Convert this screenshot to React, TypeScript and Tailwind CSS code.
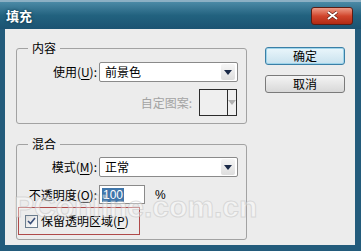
import React from "react";

const cjk = "font-['Noto_Sans_CJK_SC','Liberation_Sans',sans-serif]";

const ArrowDown: React.FC<{ color?: string }> = ({ color = "#1b2a48" }) => (
  <svg width="8" height="5" viewBox="0 0 8 5">
    <path d="M0 0 H8 L4 5 Z" fill={color} />
  </svg>
);

const Dropdown: React.FC<{ value: string }> = ({ value }) => (
  <div className="ml-[2px] w-[139px] h-[20px] bg-white border border-[#8a8a8a] rounded-[2px] flex items-center">
    <span className="pl-[5px] flex-1 text-[12px] text-black leading-none">{value}</span>
    <div className="w-[14px] h-[16px] mr-[2px] rounded-[2px] bg-gradient-to-b from-[#f6f6f6] to-[#dedede] flex items-center justify-center">
      <ArrowDown />
    </div>
  </div>
);

const Button: React.FC<{ label: string; primary?: boolean }> = ({ label, primary }) => (
  <div
    className={`w-[80px] h-[18px] rounded-[3px] border flex items-center justify-center text-[12px] text-black leading-none ${
      primary
        ? "border-[#3b7fa6] bg-gradient-to-b from-[#eaf6fb] to-[#c9e2ee] shadow-[inset_0_0_0_1px_#9ed4ea]"
        : "border-[#7a7a7a] bg-gradient-to-b from-[#f4f4f4] to-[#d8d8d8]"
    }`}
  >
    {label}
  </div>
);

const U: React.FC<{ c: string }> = ({ c }) => <span className="underline underline-offset-2">{c}</span>;

export default function App() {
  return (
    <div className={`w-[361px] h-[251px] flex flex-col bg-[#235b7b] relative overflow-hidden ${cjk}`}>
      {/* title bar */}
      <div className="h-[29px] flex items-center pl-[6px] bg-gradient-to-b from-[#4b8aa6] via-[#22627f] to-[#1b5372] border-t-[2px] border-[#8cb0c4]">
        <span className="text-white font-bold text-[13px] leading-none [text-shadow:0_0_3px_#0b2b3d]">填充</span>
        <div className="ml-auto mr-[8px] w-[42px] h-[18px] rounded-[3px] border border-[#5b1d14] bg-gradient-to-b from-[#ec9a86] via-[#d1452c] to-[#b02a14] flex items-center justify-center">
          <svg width="11" height="9" viewBox="0 0 11 9">
            <path d="M1 1 L10 8 M10 1 L1 8" stroke="#5a1a10" strokeWidth="3.2" />
            <path d="M1 1 L10 8 M10 1 L1 8" stroke="#ffffff" strokeWidth="2" />
          </svg>
        </div>
      </div>

      {/* body */}
      <div className="flex-1 ml-[5px] mr-[6px] mb-[6px] bg-[#ececec] flex">
        <div className="ml-[11px] w-[231px] pt-[11px] flex flex-col">
          <fieldset className="border border-[#a2a2a2] rounded-[3px] p-0 m-0">
            <legend className="ml-[11px] px-[4px] text-[12px] leading-[16px] text-black">内容</legend>
            <div className="pt-[6px] flex items-center">
              <span className="w-[80px] text-right text-[12px] text-black leading-none">
                使用(<U c="U" />):
              </span>
              <Dropdown value="前景色" />
            </div>
            <div className="mt-[7px] pb-[7px] flex items-center">
              <span className="w-[175px] text-right text-[12px] text-[#a3a3a3] leading-none">自定图案:</span>
              <div className="ml-[7px] w-[38px] h-[27px] border border-[#2b2b2b] bg-[#efefef] flex">
                <div className="flex-1" />
                <div className="w-[9px] border-l border-[#2b2b2b] flex items-center justify-center">
                  <ArrowDown color="#b0b0b0" />
                </div>
              </div>
            </div>
          </fieldset>

          <fieldset className="mt-[12px] border border-[#a2a2a2] rounded-[3px] p-0 m-0 mx-0">
            <legend className="ml-[11px] px-[4px] text-[12px] leading-[16px] text-black">混合</legend>
            <div className="pt-[5px] flex items-center">
              <span className="w-[80px] text-right text-[12px] text-black leading-none">
                模式(<U c="M" />):
              </span>
              <Dropdown value="正常" />
            </div>
            <div className="mt-[8px] flex items-center">
              <span className="w-[80px] text-right text-[12px] text-black leading-none whitespace-nowrap">
                不透明度(<U c="O" />):
              </span>
              <div className="ml-[2px] w-[46px] h-[19px] bg-white border border-[#8a8a8a] flex items-center pl-[2px]">
                <span className="bg-[#3f76ab] text-white text-[12px] leading-[14px] px-[1px] font-['Liberation_Sans',sans-serif]">100</span>
              </div>
              <span className="ml-[10px] text-[12px] text-black leading-none font-['Liberation_Sans',sans-serif]">%</span>
            </div>
            <div className="mt-[3px] mb-[4px] ml-[1px] w-[122px] h-[28px] border border-[#b04a4a] flex items-center pl-[6px]">
              <div className="w-[13px] h-[13px] border border-[#6b7d8e] bg-gradient-to-br from-[#dcdcdc] to-[#ffffff] flex items-center justify-center">
                <svg width="9" height="8" viewBox="0 0 9 8">
                  <path d="M1 4 L3.5 6.5 L8 1" stroke="#3a4f7a" strokeWidth="1.6" fill="none" />
                </svg>
              </div>
              <span className="ml-[3px] text-[12px] text-black leading-none">
                保留透明区域(<U c="P" />)
              </span>
            </div>
          </fieldset>
        </div>

        <div className="ml-[18px] pt-[18px] flex flex-col gap-[10px]">
          <Button label="确定" primary />
          <Button label="取消" />
        </div>
      </div>

      {/* watermark */}
      <div className="absolute left-[14px] top-[192px] text-[30px] leading-none font-bold text-white/40 [-webkit-text-stroke:1px_rgba(190,190,190,0.5)] font-['Liberation_Sans',sans-serif] pointer-events-none">
        PConline.com.cn
      </div>
    </div>
  );
}
